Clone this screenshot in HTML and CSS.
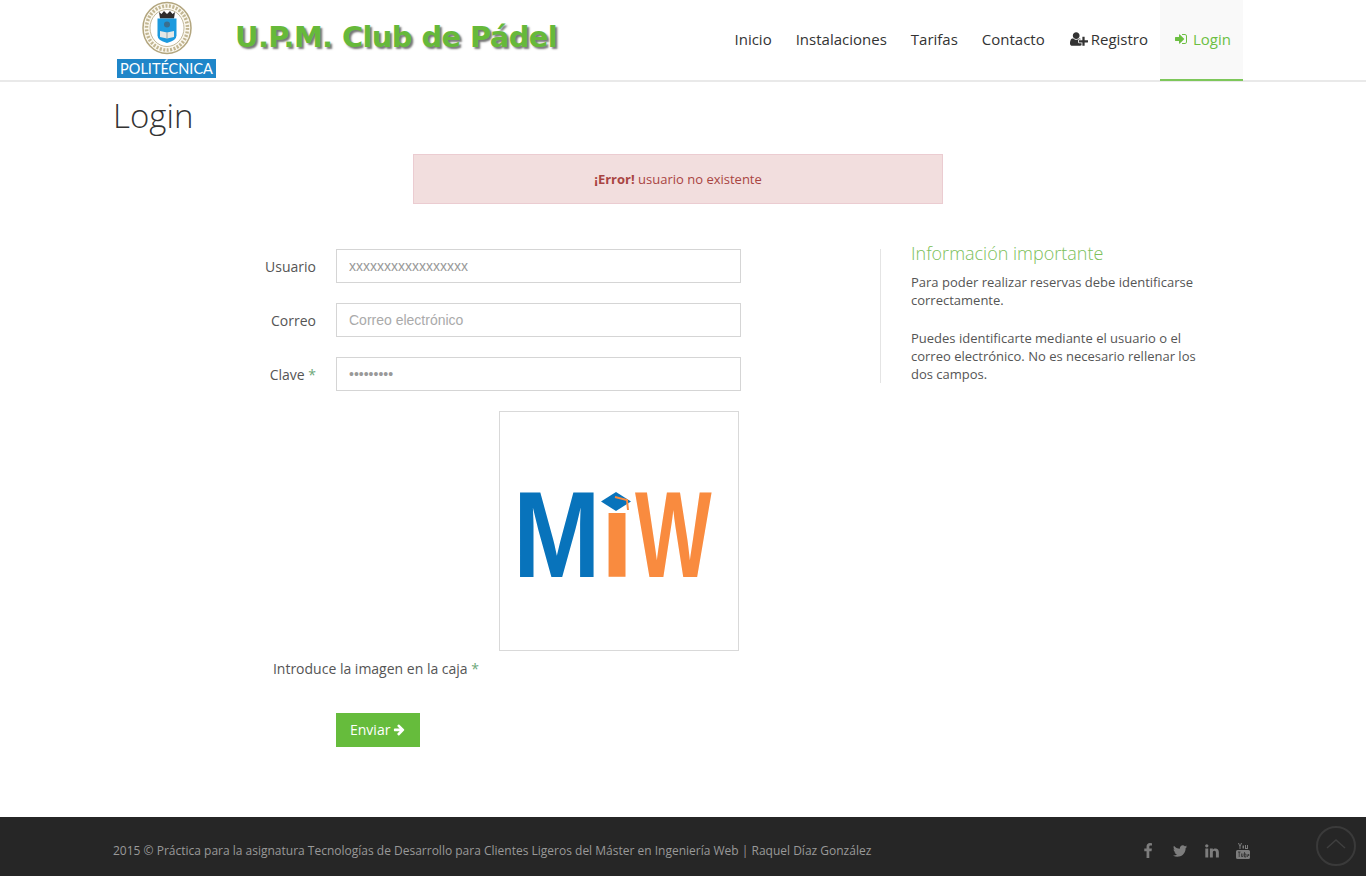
FILE: index.html
```html
<!DOCTYPE html>
<html lang="es">

<head>
 <meta charset="UTF-8">
 <meta name="viewport" content="width=device-width, initial-scale=1.0">
 <title>Login</title>
 <link rel="stylesheet" href="styles.css">
</head>

<body>

 <header class="topbar">
  <div class="container topbar-inner">
   <a class="brand-logo" href="#">
    <svg class="seal" viewBox="0 0 52 54" width="52" height="54">
     <ellipse cx="26" cy="27" rx="24" ry="25.500" fill="#fbf8ef" stroke="#b3a67f" stroke-width="1.500"/>
     <ellipse cx="26" cy="27" rx="20.500" ry="22" fill="none" stroke="#c2b692" stroke-width="3.500" stroke-dasharray="2 1.500"/>
     <ellipse cx="26" cy="27" rx="17" ry="18.500" fill="#fff" stroke="#a99c76" stroke-width="0.700"/>
     <path d="M18 11l2.500 2 2.500-3 3 3 3-3 2.500 3 2.500-2-1 6.500H19z" fill="#2f2c2b"/>
     <path d="M16.500 17.500h19v17q0 5-9.500 7.500-9.500-2.500-9.500-7.500z" fill="#1c9ade"/>
     <circle cx="26" cy="23.500" r="3" fill="#3b6f8f"/>
     <path d="M19 30l7 1.500 7-1.500v6l-7 1.500-7-1.500z" fill="#e4e8e6"/>
     <path d="M26 31.500v6" stroke="#77848a" stroke-width="0.700"/>
    </svg>
    <span class="seal-name">POLITÉCNICA</span>
   </a>
   <a class="brand-title" href="#">U.P.M. Club de Pádel</a>
   <nav class="main-nav">
    <a href="#">Inicio</a>
    <a href="#">Instalaciones</a>
    <a href="#">Tarifas</a>
    <a href="#">Contacto</a>
    <a class="nav-register" href="#">
     <svg class="icon" viewBox="0 0 2048 1792" width="18" height="16"><path d="M704 896q-159 0-271.500-112.500t-112.500-271.500 112.500-271.500 271.500-112.500 271.500 112.500 112.500 271.500-112.500 271.500-271.500 112.500zm960 128h352q13 0 22.500 9.500t9.500 22.500v192q0 13-9.500 22.500t-22.500 9.500h-352v352q0 13-9.500 22.500t-22.500 9.500h-192q-13 0-22.500-9.500t-9.500-22.500v-352h-352q-13 0-22.500-9.500t-9.500-22.500v-192q0-13 9.500-22.500t22.500-9.500h352v-352q0-13 9.500-22.500t22.500-9.500h192q13 0 22.500 9.500t9.500 22.500v352zm-736 224q0 52 38 90t90 38h256v238q-68 50-171 50h-874q-121 0-194-69t-73-190q0-53 3.500-103.500t14-109 26.500-108.500 43-97.500 62-81 85.500-53.500 111.500-20q19 0 39 17 79 61 154.500 91.500t164.500 30.500 164.500-30.500 154.500-91.500q20-17 39-17 132 0 217 96h-223q-52 0-90 38t-38 90v192z"/></svg>
     Registro
    </a>
    <a class="active" href="#">
     <svg class="icon" viewBox="0 0 1792 1792" width="14" height="14"><path d="M1312 896q0 26-19 45l-544 544q-19 19-45 19t-45-19-19-45v-288h-448q-26 0-45-19t-19-45v-384q0-26 19-45t45-19h448v-288q0-26 19-45t45-19 45 19l544 544q19 19 19 45zm352-352v704q0 119-84.500 203.500t-203.500 84.500h-320q-13 0-22.500-9.500t-9.500-22.500q0-4-1-20t-.5-26.500 3-23.500 10-19.500 20.500-6.500h320q66 0 113-47t47-113v-704q0-66-47-113t-113-47h-312l-11.500-1-11.500-3-8-5.500-7-9-2-13.500q0-4-1-20t-.5-26.500 3-23.500 10-19.500 20.500-6.500h320q119 0 203.500 84.500t84.500 203.500z"/></svg>
     Login
    </a>
   </nav>
  </div>
 </header>

 <main class="container">
  <h1 class="page-title">Login</h1>

  <div class="alert-error"><strong>¡Error!</strong> usuario no existente</div>

  <div class="login-wrap">
   <form class="login-form">
    <div class="form-row">
     <label for="usuario">Usuario</label>
     <input type="text" id="usuario" value="xxxxxxxxxxxxxxxxx">
    </div>
    <div class="form-row">
     <label for="correo">Correo</label>
     <input type="text" id="correo" placeholder="Correo electrónico">
    </div>
    <div class="form-row">
     <label for="clave">Clave <span class="req">*</span></label>
     <input type="password" id="clave" value="xxxxxxxxx">
    </div>

    <div class="captcha-box">
     <svg viewBox="0 0 238 238" width="238" height="238" role="img" aria-label="MiW">
      <g class="miw">
       <text class="miw-blue" transform="translate(13 165) scale(.855 1)">M</text>
       <text class="miw-orange" transform="translate(100 165)">i</text>
       <text class="miw-orange" transform="translate(135 165) scale(.66 1)">W</text>
      </g>
      <rect x="98" y="74" width="36" height="27" fill="#fff"/>
      <path d="M116 80l15 9.500-15 9.500-15-9.500z" fill="#0873bb"/>
      <path d="M115 85l12 3 1 10" fill="none" stroke="#f98b3f" stroke-width="2"/>
     </svg>
    </div>

    <label class="captcha-label" for="captcha">Introduce la imagen en la caja <span class="req">*</span></label>

    <button class="btn-send" type="button">
     Enviar
     <svg class="icon" viewBox="0 0 1792 1792" width="15" height="15"><path d="M1600 960q0 54-37 91l-651 651q-39 37-91 37-51 0-90-37l-75-75q-38-38-38-91t38-91l293-293h-704q-52 0-84.500-37.500t-32.500-90.500v-128q0-53 32.500-90.500t84.500-37.500h704l-293-294q-38-36-38-90t38-90l75-75q38-38 90-38 53 0 91 38l651 651q37 35 37 90z"/></svg>
    </button>
   </form>

   <aside class="info-panel">
    <h3>Información importante</h3>
    <p>Para poder realizar reservas debe identificarse correctamente.</p>
    <p>Puedes identificarte mediante el usuario o el correo electrónico. No es necesario rellenar los dos campos.</p>
   </aside>
  </div>
 </main>

 <footer class="site-footer">
  <div class="container footer-inner">
   <span class="copy">2015 © Práctica para la asignatura Tecnologías de Desarrollo para Clientes Ligeros del Máster en Ingeniería Web | Raquel Díaz González</span>
   <div class="social">
    <a href="#"><svg viewBox="0 0 1792 1792" width="16" height="16"><path d="M1343 12v264h-157q-86 0-116 36t-30 108v194h293l-39 296h-254v759h-306v-759h-255v-296h255v-218q0-186 104-288.500t277-102.500q147 0 228 12z"/></svg></a>
    <a href="#"><svg viewBox="0 0 1792 1792" width="16" height="16"><path d="M1684 408q-67 98-162 167 1 14 1 42 0 130-38 259.500t-115.500 248.500-184.500 210.500-258 146-323 54.500q-271 0-496-145 35 4 78 4 225 0 401-138-105-2-188-64.500t-114-159.500q33 5 61 5 43 0 85-11-112-23-185.500-111.500t-73.500-205.500v-4q68 38 146 41-66-44-105-115t-39-154q0-88 44-163 121 149 294.500 238.500t371.500 99.500q-8-38-8-74 0-134 94.500-228.500t228.500-94.500q140 0 236 102 109-21 205-78-37 115-142 178 107-15 210-57z"/></svg></a>
    <a href="#"><svg viewBox="0 0 1792 1792" width="16" height="16"><path d="M477 625v991h-330v-991h330zm21-306q1 73-50.500 122t-135.500 49h-2q-82 0-132-49t-50-122q0-74 51.500-122.500t134.500-48.500 133 48.500 51 122.500zm1166 729v568h-329v-530q0-105-40.500-164.500t-126.500-59.500q-63 0-105.500 34.500t-63.500 85.500q-11 30-11 81v553h-329q2-399 2-647t-1-296l-1-48h329v144h-2q20-32 41-56t56.500-52 87-43.500 114.500-15.500q171 0 275 113.500t104 332.500z"/></svg></a>
    <a href="#"><svg viewBox="0 0 14 16" width="14" height="16"><path d="M2 0h1l1 2.500L5 0h1L4.500 3.500V6h-1V3.500zM6.500 2.500h1.500v3H6.500zM9 2h1v3h1V2h1v4H9zM1.500 7h11q1.500 0 1.500 1.500v6q0 1.500-1.500 1.500h-11Q0 16 0 14.500v-6Q0 7 1.500 7z"/><path d="M2 9h2.500M3.200 9v5M5.500 10.500v3h1.500v-3M8.500 9v5M8.500 11h1.500v3H8.500M11.500 11.500h1.500v1h-1.500v1.500" fill="none" stroke="#262626" stroke-width="0.700"/></svg></a>
   </div>
  </div>
 </footer>

 <a class="to-top" href="#">
  <svg viewBox="0 0 40 40" width="40" height="40"><circle cx="20" cy="20" r="19" fill="none" stroke="#3a3a3a" stroke-width="2"/><path d="M11 22l9-8 9 8" fill="none" stroke="#3f3f3f" stroke-width="1.500"/></svg>
 </a>

</body>

</html>
```

FILE: styles.css
```css
* {
 box-sizing: border-box;
}

body {
 margin: 0;
 font-family: 'Open Sans', sans-serif;
 font-size: 13px;
 color: #555;
 background-color: #fff;
}

a {
 color: inherit;
 text-decoration: none;
}

.container {
 width: 1140px;
 margin: 0 auto;
}

.topbar {
 height: 82px;
 border-bottom: 2px solid #e9e9e9;
}

.topbar-inner {
 display: flex;
 height: 80px;
}

.brand-logo {
 display: flex;
 flex-direction: column;
 align-items: center;
 width: 99px;
 margin-left: 4px;
 padding-top: 1px;
}

.seal {
 display: block;
}

.seal-name {
 display: block;
 width: 100%;
 height: 19px;
 margin-top: 4px;
 background-color: #1f86c9;
 color: #fff;
 font-family: 'Lato', sans-serif;
 font-size: 14.500px;
 line-height: 19px;
 text-align: center;
}

.brand-title {
 margin-left: 19px;
 padding-top: 15px;
 font-family: 'DejaVu Sans', sans-serif;
 font-size: 29px;
 font-weight: bold;
 letter-spacing: -0.650px;
 line-height: 44px;
 color: #66b93a;
 text-shadow: 2px 2px 2px #777;
 white-space: nowrap;
}

.main-nav {
 display: flex;
 margin-left: auto;
 margin-right: 10px;
 font-size: 15px;
 color: #333;
}

.main-nav a {
 display: flex;
 align-items: center;
 gap: 5px;
 height: 81px;
 padding: 0 12px 4px;
}

.main-nav .nav-register {
 gap: 3px;
 padding-left: 13px;
}

.main-nav .active {
 padding-bottom: 2px;
 padding-left: 14px;
 background-color: #f9f9f9;
 border-bottom: 2px solid #7dc75a;
 color: #6cbf42;
}

.icon {
 fill: currentColor;
}

.page-title {
 margin: 0;
 padding-top: 11px;
 font-size: 33px;
 font-weight: 300;
 line-height: 46px;
 color: #333;
}

.alert-error {
 width: 530px;
 height: 50px;
 margin: 15px 0 0 300px;
 border: 1px solid #ebccd1;
 background-color: #f2dede;
 color: #a94442;
 line-height: 48px;
 text-align: center;
}

.login-wrap {
 display: flex;
 align-items: flex-start;
 margin-top: 45px;
}

.login-form {
 width: 628px;
}

.form-row {
 display: flex;
 align-items: center;
 margin-bottom: 20px;
}

.form-row label {
 width: 203px;
 margin-right: 20px;
 font-size: 14px;
 text-align: right;
}

.form-row input {
 width: 405px;
 height: 34px;
 padding: 0 12px;
 border: 1px solid #d5d5d5;
 color: #999;
 font-family: 'Liberation Sans', sans-serif;
 font-size: 14px;
}

.form-row input::placeholder {
 color: #aaa;
}

.req {
 color: #6da77a;
}

.captcha-box {
 width: 240px;
 height: 240px;
 margin-left: 386px;
 border: 1px solid #d9d9d9;
}

.captcha-box svg {
 display: block;
}

.miw text {
 font-family: 'Liberation Sans', sans-serif;
 font-size: 123px;
 font-weight: bold;
}

.miw-blue {
 fill: #0873bb;
}

.miw-orange {
 fill: #f98b3f;
}

.captcha-label {
 display: block;
 width: 366px;
 margin-top: 8px;
 font-size: 14px;
 line-height: 20px;
 text-align: right;
}

.btn-send {
 display: flex;
 align-items: center;
 gap: 3px;
 width: 84px;
 height: 34px;
 margin: 34px 0 0 223px;
 padding: 0 14px 2px;
 border: none;
 background-color: #66bc3c;
 color: #fff;
 font-family: 'Open Sans', sans-serif;
 font-size: 14px;
}

.info-panel {
 width: 328px;
 margin-left: 139px;
 padding-left: 30px;
 border-left: 1px solid #e4e4e4;
 line-height: 18px;
}

.info-panel h3 {
 margin: -7px 0 9px;
 font-size: 18px;
 font-weight: 300;
 line-height: 22px;
 color: #7cc05a;
}

.info-panel p {
 margin: 0 0 20px;
}

.info-panel p:last-child {
 margin-bottom: 0;
}

.site-footer {
 height: 59px;
 margin-top: 70px;
 background-color: #262626;
 color: #999;
}

.footer-inner {
 display: flex;
 align-items: center;
 justify-content: space-between;
 height: 100%;
 padding: 8px 3px 0 0;
 font-size: 12px;
}

.social {
 display: flex;
 align-items: center;
 gap: 16px;
 fill: #7d7d7d;
}

.social a {
 display: flex;
}

.to-top {
 position: fixed;
 right: 10px;
 bottom: 10px;
 display: block;
 width: 40px;
 height: 40px;
}
```
